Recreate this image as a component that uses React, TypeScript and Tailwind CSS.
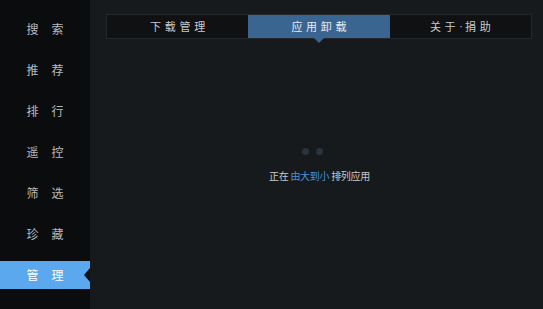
import React from 'react';

const menu = [
  ['搜', '索'],
  ['推', '荐'],
  ['排', '行'],
  ['遥', '控'],
  ['筛', '选'],
  ['珍', '藏'],
  ['管', '理'],
];

export default function App() {
  return <div className="w-[543px] h-[309px] flex overflow-hidden bg-[#171a1d]" style={{ fontFamily: '"Noto Sans CJK SC", "Noto Sans", sans-serif' }}>
      {/* Sidebar */}
      <div className="w-[90px] h-full bg-[#0b0c0e] flex flex-col pt-[15px] gap-[13px]">
        {menu.map(([a, b], i) => {
        const active = i === menu.length - 1;
        return <div key={i} className={`relative h-[28px] flex items-center justify-center gap-[13px] text-[12px] ${active ? 'bg-[#5ca8ee] text-white' : 'text-[#b8babc]'}`}>
              <span>{a}</span>
              <span>{b}</span>
              {active && <div className="absolute right-0 top-[7px] w-0 h-0 border-y-[7px] border-y-transparent border-r-[6px] border-r-[#111315]" />}
            </div>;
      })}
      </div>

      {/* Main */}
      <div className="flex-1 flex flex-col">
        <div className="mt-[14px] ml-[16px] w-[426px] h-[25px] grid grid-cols-3 border border-[#24282c] bg-[#0f1113] text-[11px]">
          <div className="flex items-center justify-center tracking-[3.7px] pl-[3.7px] text-[#c9cbcd]">下载管理</div>
          <div className="relative flex items-center justify-center tracking-[3.7px] pl-[3.7px] bg-[#3a6591] text-[#e6edf4]">
            应用卸载
            <div className="absolute left-1/2 -translate-x-1/2 -bottom-[5px] w-0 h-0 border-x-[5px] border-x-transparent border-t-[5px] border-t-[#3a6591]" />
          </div>
          <div className="flex items-center justify-center tracking-[3.7px] pl-[3.7px] text-[#c9cbcd]">
            关于<span className="font-['Liberation_Sans'] tracking-[2px]">·</span>捐助
          </div>
        </div>

        <div className="flex flex-col items-center mt-[109px]">
          <div className="flex gap-[7px] -ml-[8px]">
            <span className="w-[7px] h-[7px] rounded-full bg-[#2b333d]" />
            <span className="w-[7px] h-[7px] rounded-full bg-[#2b333d]" />
          </div>
          <div className="mt-[13px] ml-[6px] text-[10px] tracking-[-0.3px] text-[#c7c9cb]">
            正在 <span className="text-[#4a93d6]">由大到小</span> 排列应用
          </div>
        </div>
      </div>
    </div>;
}
